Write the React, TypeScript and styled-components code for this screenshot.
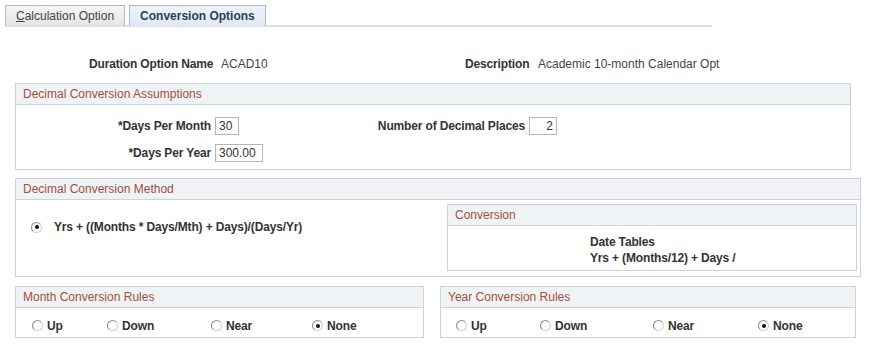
import React from "react";
import styled, { createGlobalStyle } from "styled-components";

const Global = createGlobalStyle`
  html, body { margin: 0; padding: 0; background: #fff; }
  body { font-family: "Liberation Sans", Arial, sans-serif; font-size: 12px; color: #333; }
`;

const Page = styled.div`
  width: 869px;
  height: 346px;
  overflow: hidden;
  padding-top: 5px;
  box-sizing: border-box;
`;

const TabBar = styled.div`
  display: flex;
  gap: 4px;
  margin-left: 5px;
  width: 707px;
  border-bottom: 2px solid #d6e1f0;
  height: 20px;
`;

const Tab = styled.div<{ $active?: boolean }>`
  height: 21px;
  box-sizing: border-box;
  padding: 0 10px;
  display: flex;
  align-items: center;
  border: 1px solid ${(p) => (p.$active ? "#a9bad2" : "#b3b8bf")};
  border-bottom: none;
  background: ${(p) =>
    p.$active
      ? "linear-gradient(#eef3fa, #dfe8f4)"
      : "linear-gradient(#f6f6f6, #e4e4e4)"};
  color: ${(p) => (p.$active ? "#2e3e52" : "#444")};
  font-weight: ${(p) => (p.$active ? "bold" : "normal")};
  font-size: 12px;
  u { text-decoration: underline; }
`;

const InfoRow = styled.div`
  display: grid;
  grid-template-columns: 89px 132px 244px 73px auto;
  align-items: center;
  margin-top: 29px;
  height: 16px;
`;

const Label = styled.span`
  font-weight: bold;
  color: #333;
  white-space: nowrap;
  letter-spacing: -0.15px;
`;

const Value = styled.span`
  color: #444;
  white-space: nowrap;
`;

const Group = styled.div<{ $width: number; $ml?: number }>`
  width: ${(p) => p.$width}px;
  margin-left: ${(p) => p.$ml ?? 0}px;
  box-sizing: border-box;
  border: 1px solid #cdd2d8;
  background: #fff;
`;

const GroupHead = styled.div`
  height: 21px;
  box-sizing: border-box;
  background: #f0f3f5;
  border-bottom: 1px solid #cdd2d8;
  color: #a0503a;
  padding-left: 7px;
  display: flex;
  align-items: center;
  font-size: 12px;
`;

const AssumptionGrid = styled.div`
  display: grid;
  grid-template-columns: 195px 50px 256px 30px;
  column-gap: 4px;
  row-gap: 9px;
  align-items: center;
  padding: 12px 0 7px 0;
`;

const FieldLabel = styled.span`
  font-weight: bold;
  color: #333;
  text-align: right;
  white-space: nowrap;
  letter-spacing: -0.15px;
`;

const Input = styled.div<{ $w: number; $right?: boolean }>`
  width: ${(p) => p.$w}px;
  height: 18px;
  box-sizing: border-box;
  border: 1px solid #b5b5b5;
  display: flex;
  align-items: center;
  justify-content: ${(p) => (p.$right ? "flex-end" : "flex-start")};
  padding: 0 3px;
  color: #333;
  background: #fff;
`;

const MethodBody = styled.div`
  display: flex;
  padding: 4px 3px 5px 15px;
`;

const MethodLeft = styled.div`
  flex: 1;
  padding-top: 16px;
`;

const RadioItem = styled.label`
  display: flex;
  align-items: center;
  gap: 4px;
  font-weight: bold;
  color: #333;
  white-space: nowrap;
  letter-spacing: -0.15px;
`;

const RadioCircle = styled.span<{ $checked?: boolean; $gap?: number }>`
  width: 11px;
  height: 11px;
  box-sizing: border-box;
  border-radius: 50%;
  border: 1px solid #8c8c8c;
  border-right-color: #d2d2d2;
  border-bottom-color: #d2d2d2;
  background: radial-gradient(circle at 60% 60%, #ffffff 40%, #eeeeee 100%);
  margin-right: ${(p) => p.$gap ?? 0}px;
  position: relative;
  flex: none;
  &::after {
    content: "";
    display: ${(p) => (p.$checked ? "block" : "none")};
    position: absolute;
    left: 2.5px;
    top: 2.5px;
    width: 4px;
    height: 4px;
    border-radius: 50%;
    background: #111;
  }
`;

const InnerBody = styled.div`
  padding: 8px 0 8px 142px;
  line-height: 16px;
  font-weight: bold;
  color: #333;
  height: 44px;
  box-sizing: border-box;
  letter-spacing: -0.15px;
`;

const Row = styled.div`
  display: flex;
  align-items: flex-start;
`;

const Stack = styled.div`
  display: flex;
  flex-direction: column;
`;

const RadioRow = styled.div<{ $cols: string; $pl: number }>`
  display: grid;
  grid-template-columns: ${(p) => p.$cols};
  align-items: center;
  height: 29px;
  padding: 6px 0 0 ${(p) => p.$pl}px;
  box-sizing: border-box;
`;

const Radio: React.FC<{ checked?: boolean; label: string; gap?: number }> = ({
  checked,
  label,
  gap,
}) => (
  <RadioItem>
    <RadioCircle $checked={checked} $gap={gap} />
    {label}
  </RadioItem>
);

const RuleGroup: React.FC<{
  title: string;
  width: number;
  ml: number;
  pl: number;
  cols: string;
}> = ({ title, width, ml, pl, cols }) => (
  <Group $width={width} $ml={ml}>
    <GroupHead>{title}</GroupHead>
    <RadioRow $cols={cols} $pl={pl}>
      <Radio label="Up" />
      <Radio label="Down" />
      <Radio label="Near" />
      <Radio label="None" checked />
    </RadioRow>
  </Group>
);

export default function App() {
  return (
    <Page>
      <Global />
      <TabBar>
        <Tab>
          <span>
            <u>C</u>alculation Option
          </span>
        </Tab>
        <Tab $active>Conversion Options</Tab>
      </TabBar>

      <InfoRow>
        <span />
        <Label>Duration Option Name</Label>
        <Value>ACAD10</Value>
        <Label>Description</Label>
        <Value>Academic 10-month Calendar Opt</Value>
      </InfoRow>

      <Stack style={{ marginTop: 11 }}>
        <Group $width={836} $ml={15}>
          <GroupHead>Decimal Conversion Assumptions</GroupHead>
          <AssumptionGrid>
            <FieldLabel>*Days Per Month</FieldLabel>
            <Input $w={24}>30</Input>
            <FieldLabel>Number of Decimal Places</FieldLabel>
            <Input $w={28} $right>
              2
            </Input>
            <FieldLabel>*Days Per Year</FieldLabel>
            <Input $w={48}>300.00</Input>
          </AssumptionGrid>
        </Group>
      </Stack>

      <Stack style={{ marginTop: 8 }}>
        <Group $width={846} $ml={15}>
          <GroupHead>Decimal Conversion Method</GroupHead>
          <MethodBody>
            <MethodLeft>
              <Radio checked gap={8} label="Yrs + ((Months * Days/Mth) + Days)/(Days/Yr)" />
            </MethodLeft>
            <Group $width={410}>
              <GroupHead>Conversion</GroupHead>
              <InnerBody>
                <div>Date Tables</div>
                <div>Yrs + (Months/12) + Days /</div>
              </InnerBody>
            </Group>
          </MethodBody>
        </Group>
      </Stack>

      <Row style={{ marginTop: 9 }}>
        <RuleGroup
          title="Month Conversion Rules"
          width={409}
          ml={15}
          pl={16}
          cols="75px 104px 101px auto"
        />
        <RuleGroup
          title="Year Conversion Rules"
          width={416}
          ml={16}
          pl={15}
          cols="84px 113px 105px auto"
        />
      </Row>
    </Page>
  );
}
